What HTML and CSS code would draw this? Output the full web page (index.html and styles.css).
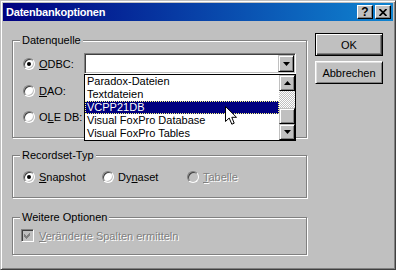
FILE: index.html
```html
<!DOCTYPE html>
<html lang="de">
<head>
    <meta charset="UTF-8">
    <title>Datenbankoptionen</title>
    <link rel="stylesheet" href="styles.css">
</head>
<body>
    <div class="fenster">
        <div class="titelleiste">
            <span class="titel">Datenbankoptionen</span>
            <div class="titel-knoepfe">
                <span class="titel-knopf">?</span>
                <span class="titel-knopf">
                    <svg width="8" height="7" viewBox="0 0 8 7"><path d="M0.5 0 L7.5 7 M7.5 0 L0.5 7" stroke="#000" stroke-width="1.7" fill="none"/></svg>
                </span>
            </div>
        </div>

        <div class="inhalt">
            <div class="spalte-links">
                <fieldset class="gruppe gruppe-quelle">
                    <legend>Datenquelle</legend>
                    <div class="zeile zeile-odbc">
                        <span class="radio an"></span>
                        <span class="beschriftung"><u>O</u>DBC:</span>
                        <div class="combo">
                            <div class="combo-feld">
                                <span class="erhaben combo-knopf">
                                    <svg width="7" height="4" viewBox="0 0 7 4"><path d="M0 0 H7 L3.5 4 Z" fill="#000"/></svg>
                                </span>
                            </div>
                            <div class="liste">
                                <div class="eintraege">
                                    <div class="eintrag">Paradox-Dateien</div>
                                    <div class="eintrag">Textdateien</div>
                                    <div class="eintrag aktiv">VCPP21DB</div>
                                    <div class="eintrag">Visual FoxPro Database</div>
                                    <div class="eintrag">Visual FoxPro Tables</div>
                                </div>
                                <div class="rollbalken">
                                    <span class="erhaben rollknopf">
                                        <svg width="7" height="4" viewBox="0 0 7 4"><path d="M0 4 H7 L3.5 0 Z" fill="#000"/></svg>
                                    </span>
                                    <span class="spur"></span>
                                    <span class="erhaben schieber"></span>
                                    <span class="erhaben rollknopf">
                                        <svg width="7" height="4" viewBox="0 0 7 4"><path d="M0 0 H7 L3.5 4 Z" fill="#000"/></svg>
                                    </span>
                                </div>
                                <!-- Mauszeiger liegt ueber der Liste -->
                                <svg class="zeiger" width="13" height="20" viewBox="0 0 13 20">
                                    <path d="M0.5 0.5 V15.5 L4.2 12 L6.8 18.2 L9.2 17.2 L6.8 11.3 H11.5 Z" fill="#fff" stroke="#000" stroke-width="1" stroke-linejoin="miter"/>
                                </svg>
                            </div>
                        </div>
                    </div>
                    <div class="zeile zeile-dao">
                        <span class="radio"></span>
                        <span class="beschriftung"><u>D</u>AO:</span>
                    </div>
                    <div class="zeile zeile-ole">
                        <span class="radio"></span>
                        <span class="beschriftung">O<u>L</u>E DB:</span>
                    </div>
                </fieldset>

                <fieldset class="gruppe gruppe-typ">
                    <legend>Recordset-Typ</legend>
                    <div class="zeile zeile-typ">
                        <div class="option option-snapshot">
                            <span class="radio an"></span>
                            <span><u>S</u>napshot</span>
                        </div>
                        <div class="option option-dynaset">
                            <span class="radio"></span>
                            <span>Dy<u>n</u>aset</span>
                        </div>
                        <div class="option">
                            <span class="radio aus"></span>
                            <span class="inaktiv"><u>T</u>abelle</span>
                        </div>
                    </div>
                </fieldset>

                <fieldset class="gruppe gruppe-weitere">
                    <legend>Weitere Optionen</legend>
                    <div class="zeile zeile-check">
                        <span class="kasten">
                            <svg width="7" height="7" viewBox="0 0 7 7" shape-rendering="crispEdges"><path d="M0 2 L2 4 L6 0 V3 L2 7 L0 5 Z" fill="#808080"/></svg>
                        </span>
                        <span class="inaktiv"><u>V</u>eränderte Spalten ermitteln</span>
                    </div>
                </fieldset>
            </div>

            <div class="spalte-rechts">
                <div class="knopf knopf-standard">OK</div>
                <div class="knopf">Abbrechen</div>
            </div>
        </div>
    </div>
</body>
</html>
```

FILE: styles.css
```css
* {
    box-sizing: border-box;
}

body {
    margin: 0;
    background: #c0c0c0;
    font-family: "Liberation Sans", Arial, sans-serif;
    font-size: 11px;
    color: #000;
}

u {
    text-underline-offset: 1px;
}

.fenster {
    width: 396px;
    height: 270px;
    padding: 2px;
    background: #c0c0c0;
    border: 1px solid;
    border-color: #c0c0c0 #404040 #404040 #c0c0c0;
    box-shadow: inset 1px 1px #fff, inset -1px -1px #808080;
}

/* Titelleiste */

.titelleiste {
    height: 18px;
    display: flex;
    align-items: center;
    justify-content: space-between;
    padding: 0 2px 0 3px;
    background: linear-gradient(to right, #000080, #1084d0);
}

.titel {
    color: #fff;
    font-weight: bold;
    font-size: 11px;
    letter-spacing: -0.2px;
    line-height: 18px;
}

.titel-knoepfe {
    display: flex;
    gap: 2px;
}

.titel-knopf {
    width: 16px;
    height: 14px;
    display: flex;
    align-items: center;
    justify-content: center;
    background: #c0c0c0;
    border: 1px solid;
    border-color: #fff #000 #000 #fff;
    box-shadow: inset -1px -1px #808080;
    font-weight: bold;
    font-size: 12px;
    line-height: 1;
}

/* Inhalt */

.inhalt {
    display: flex;
    gap: 8px;
    padding: 12px 10px 0 9px;
}

.spalte-links {
    width: 295px;
}

.spalte-rechts {
    width: 68px;
    display: flex;
    flex-direction: column;
    gap: 5px;
}

.gruppe {
    margin: 0;
    min-width: 0;
    border: 1px solid #808080;
    box-shadow: inset 1px 1px #fff, 1px 1px #fff;
}

.gruppe legend {
    margin-left: -1px;
    padding: 0 2px;
    line-height: 13px;
    background: #c0c0c0;
}

.gruppe-quelle {
    margin-top: 1px;
    padding: 6px 8px 13px;
}

.gruppe-typ {
    margin-top: 11px;
    padding: 8px 8px 13px;
}

.gruppe-weitere {
    margin-top: 13px;
    padding: 5px 8px 12px;
}

.zeile {
    display: flex;
    align-items: center;
}

.zeile-odbc {
    height: 21px;
}

.zeile-dao {
    height: 14px;
    margin-top: 10px;
}

.zeile-ole {
    height: 14px;
    margin-top: 12px;
}

.zeile-typ {
    height: 14px;
}

.zeile-check {
    height: 13px;
}

.beschriftung {
    width: 45px;
    line-height: 14px;
}

.option {
    display: flex;
    align-items: center;
}

.option-snapshot {
    width: 79px;
}

.option-dynaset {
    width: 85px;
}

.radio {
    flex: none;
    width: 12px;
    height: 12px;
    margin: 0 4px 0 2px;
    border-radius: 50%;
    background: #fff;
    border: 1px solid;
    border-color: #808080 #fff #fff #808080;
    box-shadow: inset 1px 1px #404040, inset -1px -1px #c0c0c0;
    display: flex;
    align-items: center;
    justify-content: center;
}

.radio.an::after {
    content: "";
    width: 4px;
    height: 4px;
    border-radius: 50%;
    background: #000;
}

.radio.aus {
    background: #c0c0c0;
}

.kasten {
    flex: none;
    width: 13px;
    height: 13px;
    margin-right: 5px;
    background: #c0c0c0;
    border: 1px solid;
    border-color: #808080 #fff #fff #808080;
    box-shadow: inset 1px 1px #404040, inset -1px -1px #c0c0c0;
    display: flex;
    align-items: center;
    justify-content: center;
}

.inaktiv {
    color: #808080;
    text-shadow: 1px 1px #fff;
}

/* Kombinationsfeld mit offener Liste */

.erhaben {
    background: #c0c0c0;
    border: 1px solid;
    border-color: #c0c0c0 #000 #000 #c0c0c0;
    box-shadow: inset 1px 1px #fff, inset -1px -1px #808080;
    display: flex;
    align-items: center;
    justify-content: center;
}

.combo {
    position: relative;
    width: 212px;
    height: 21px;
}

.combo-feld {
    height: 21px;
    padding: 1px;
    background: #fff;
    border: 1px solid;
    border-color: #808080 #fff #fff #808080;
    box-shadow: inset 1px 1px #404040, inset -1px -1px #c0c0c0;
    display: flex;
    justify-content: flex-end;
}

.combo-knopf {
    width: 16px;
    height: 17px;
}

.liste {
    position: absolute;
    left: 0;
    top: 100%;
    width: 212px;
    display: flex;
    background: #fff;
    border: 1px solid #000;
}

.eintraege {
    flex: 1;
}

.eintrag {
    height: 13px;
    line-height: 13px;
    padding-left: 2px;
    white-space: nowrap;
}

.eintrag.aktiv {
    background: #000080;
    color: #fff;
    outline: 1px dotted #ffff80;
    outline-offset: -1px;
}

.rollbalken {
    width: 16px;
    display: flex;
    flex-direction: column;
}

.rollknopf {
    height: 16px;
}

.spur {
    height: 17px;
    background: repeating-conic-gradient(#c0c0c0 0 25%, #fff 0 50%) 0 0 / 2px 2px;
}

.schieber {
    height: 16px;
}

.zeiger {
    position: absolute;
    left: 140px;
    top: 31px;
}

/* Schaltflaechen */

.knopf {
    height: 23px;
    display: flex;
    align-items: center;
    justify-content: center;
    background: #c0c0c0;
    border: 1px solid;
    border-color: #fff #000 #000 #fff;
    box-shadow: inset 1px 1px #dfdfdf, inset -1px -1px #808080;
}

.knopf-standard {
    border-color: #000;
    box-shadow: inset 1px 1px #fff, inset -1px -1px #404040, inset -2px -2px #808080;
}
```
